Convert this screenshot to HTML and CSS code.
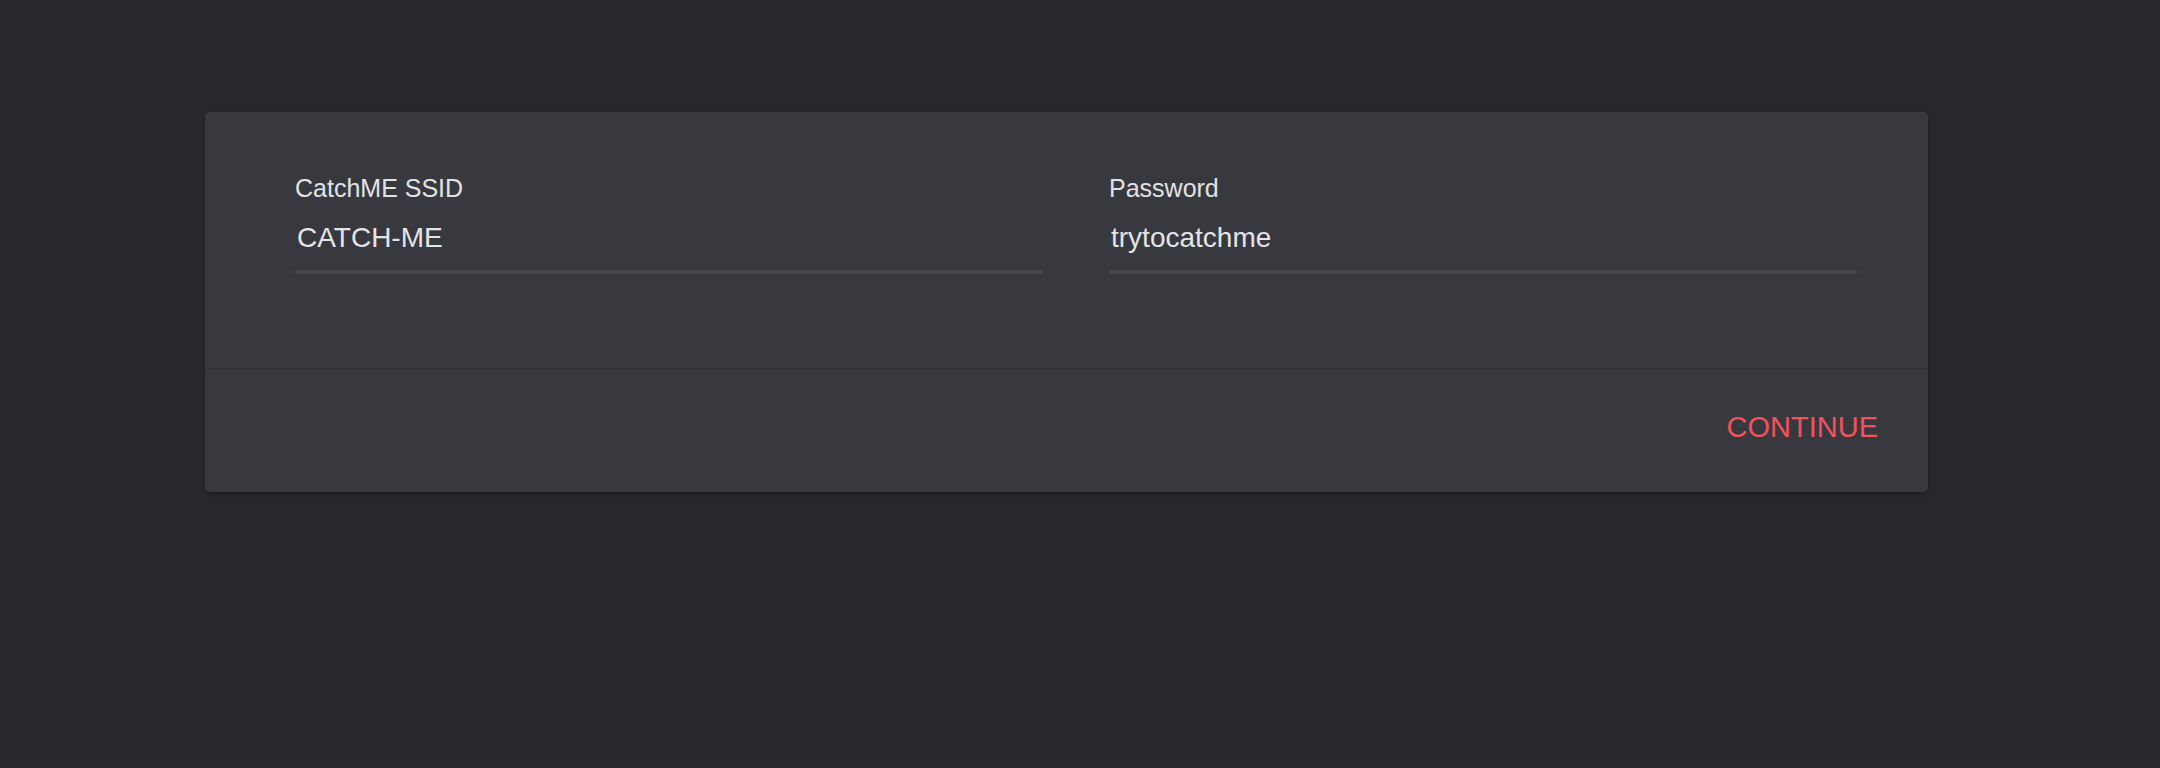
FILE: index.html
```html
<!DOCTYPE html>
<html lang="en">
<head>
<meta charset="utf-8">
<title>CatchME Setup</title>
<link rel="stylesheet" href="styles.css">
</head>
<body>
<div class="card">
  <div class="card-body">
    <div class="field">
      <label class="field-label">CatchME SSID</label>
      <div class="field-value">CATCH-ME</div>
      <div class="field-line"></div>
    </div>
    <div class="field">
      <label class="field-label">Password</label>
      <div class="field-value">trytocatchme</div>
      <div class="field-line"></div>
    </div>
  </div>
  <div class="card-footer">
    <button class="btn-continue">CONTINUE</button>
  </div>
</div>
</body>
</html>
```

FILE: styles.css
```css
html, body {
  margin: 0;
  padding: 0;
  background: #27272c;
  font-family: "Liberation Sans", Arial, Helvetica, sans-serif;
  height: 100%;
}

body {
  padding-top: 112px;
  padding-left: 205px;
  box-sizing: border-box;
}

.card {
  width: 1723px;
  height: 380px;
  background: #38393e;
  border-radius: 5px;
  box-shadow: 0 2px 4px rgba(0, 0, 0, 0.25);
  display: flex;
  flex-direction: column;
  overflow: hidden;
}

.card-body {
  height: 257px;
  box-sizing: border-box;
  padding: 61px 71px 0 90px;
  display: flex;
  gap: 66px;
  border-bottom: 1px solid #313237;
}

.field {
  flex: 1;
  display: flex;
  flex-direction: column;
}

.field-label {
  font-size: 25px;
  line-height: 30px;
  color: #e2e2e4;
}

.field-value {
  margin-top: 19px;
  font-size: 28px;
  line-height: 32px;
  color: #e4e4e6;
  padding-left: 2px;
}

.field-line {
  margin-top: 16px;
  height: 4px;
  background: #48494e;
}

.card-footer {
  flex: 1;
  display: flex;
  justify-content: flex-end;
  align-items: flex-start;
  padding: 40px 50px 0 0;
}

.btn-continue {
  background: none;
  border: 0;
  padding: 0;
  font-family: "Liberation Sans", Arial, Helvetica, sans-serif;
  font-size: 29px;
  line-height: 36px;
  color: #f2525b;
  cursor: pointer;
}
```
